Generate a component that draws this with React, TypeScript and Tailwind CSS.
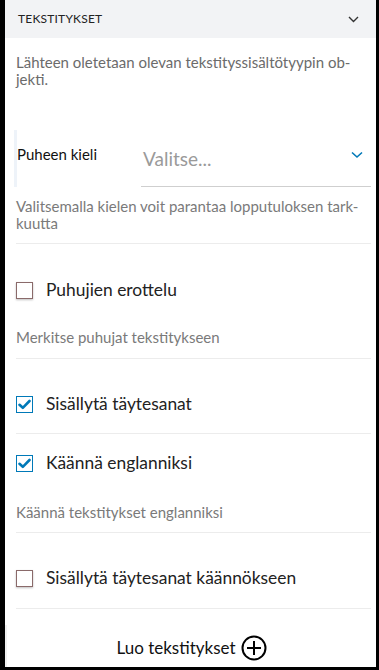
import React from "react";

const F = { fontFamily: "Lato, 'Noto Sans', sans-serif" };

function Box({ checked }: { checked?: boolean }) {
  if (checked) {
    return (
      <div className="w-[17px] h-[17px] border border-[#0079b8] bg-white flex items-center justify-center shrink-0">
        <svg width="13" height="11" viewBox="0 0 13 11">
          <path d="M1.5 5.8 L4.8 8.8 L11.5 2" fill="none" stroke="#0079b8" strokeWidth="2.6" strokeLinecap="round" strokeLinejoin="round" />
        </svg>
      </div>
    );
  }
  return <div className="w-[17px] h-[17px] border border-[#8a6a6a] bg-white shadow-[0_1px_2px_rgba(0,0,0,0.25)] shrink-0" />;
}

function CheckRow({ checked, label }: { checked?: boolean; label: string }) {
  return (
    <div className="flex items-center h-[24px]">
      <Box checked={checked} />
      <span className="ml-[13px] text-[17.4px] text-[#222]">{label}</span>
    </div>
  );
}

export default function App() {
  return (
    <div className="w-[379px] h-[670px] bg-black pl-[5px] pr-[3px] pb-[3px] flex" style={F}>
      <div className="flex-1 bg-white flex flex-col">
        <div className="h-[38px] bg-[#f2f3f5] flex items-center justify-between pl-[13px] pr-[17px] shrink-0">
          <span className="text-[12px] text-[#222] tracking-[0.2px]">TEKSTITYKSET</span>
          <svg width="11" height="7" viewBox="0 0 11 7">
            <path d="M1 1 L5.5 5.5 L10 1" fill="none" stroke="#333" strokeWidth="1.4" />
          </svg>
        </div>
        <div className="flex-1 pl-[11px] pr-[5px] flex flex-col">
          <p className="mt-[16px] text-[15px] leading-[17px] text-[#6b6b6b]">
            Lähteen oletetaan olevan tekstityssisältötyypin ob-<br />jekti.
          </p>
          <div className="mt-[42px] flex h-[57px]">
            <div className="border-l-[3px] border-[#eef3f9] flex items-center pb-[8px] w-[127px] -ml-[2px]">
              <span className="text-[15px] text-[#111]">Puheen kieli</span>
            </div>
            <div className="flex-1 border-b border-[#cfcfcf] flex items-center justify-between pt-[2px] pl-[2px] pr-[8px]">
              <span className="text-[19px] text-[#9a9a9a]">Valitse...</span>
              <svg width="12" height="8" viewBox="0 0 12 8" className="-mt-[8px]">
                <path d="M1 1.5 L6 6 L11 1.5" fill="none" stroke="#0079b8" strokeWidth="1.6" />
              </svg>
            </div>
          </div>
          <p className="mt-[11px] text-[15px] leading-[17px] text-[#7a7a7a]">
            Valitsemalla kielen voit parantaa lopputuloksen tark-<br />kuutta
          </p>
          <div className="mt-[11px] border-t border-[#ececec]" />
          <div className="mt-[34px]"><CheckRow label="Puhujien erottelu" /></div>
          <p className="mt-[27px] text-[15px] leading-[17px] text-[#7a7a7a]">Merkitse puhujat tekstitykseen</p>
          <div className="mt-[12px] border-t border-[#ececec]" />
          <div className="mt-[33px]"><CheckRow checked label="Sisällytä täytesanat" /></div>
          <div className="mt-[17px] border-t border-[#ececec]" />
          <div className="mt-[17px]"><CheckRow checked label="Käännä englanniksi" /></div>
          <p className="mt-[29px] text-[15px] leading-[17px] text-[#7a7a7a]">Käännä tekstitykset englanniksi</p>
          <div className="mt-[11px] border-t border-[#ececec]" />
          <div className="mt-[33px]"><CheckRow label="Sisällytä täytesanat käännökseen" /></div>
          <div className="mt-[18px] border-t border-[#ececec]" />
          <div className="flex-1" />
        </div>
        <div className="h-[42px] border-l-2 border-[#f0f0f0] flex items-center justify-center gap-[5px] pt-[4px] shrink-0">
          <span className="text-[17px] text-[#111]">Luo tekstitykset</span>
          <svg width="26" height="26" viewBox="0 0 26 26">
            <circle cx="13" cy="13" r="11.5" fill="none" stroke="#000" strokeWidth="2" />
            <path d="M13 6 V20 M6 13 H20" stroke="#000" strokeWidth="2" />
          </svg>
        </div>
      </div>
    </div>
  );
}
